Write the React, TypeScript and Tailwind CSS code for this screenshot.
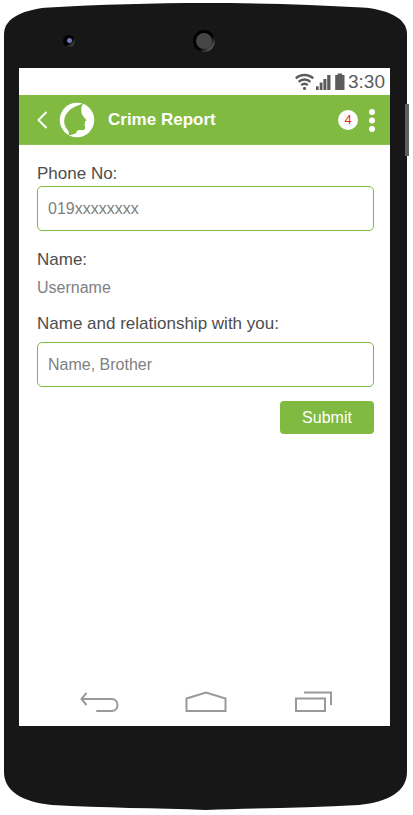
import type { ReactNode } from "react";

function StatusBar() {
  return (
    <div className="flex h-[27px] items-center justify-end gap-0.5 bg-white pr-[5px] text-[#5b5b5b]">
      <svg width="19" height="18" viewBox="0 0 19 18" fill="none" stroke="currentColor" strokeWidth="2.400" aria-hidden="true">
        <path d="M.8 5.400C5.500.9 13.500.9 18.200 5.400" />
        <path d="M3.600 8.800C7 5.800 12 5.800 15.400 8.800" />
        <path d="M6.200 12.200C8.200 10.400 10.800 10.400 12.800 12.200" />
        <circle cx="9.500" cy="15.400" r="1.600" fill="currentColor" stroke="none" />
      </svg>
      <svg width="15" height="18" viewBox="0 0 15 18" fill="currentColor" aria-hidden="true">
        <path d="M0 13.200h2.600V17H0zM3.700 9.500h2.800V17H3.700zM7.400 6h3v11h-3zM11.200 2h3.300v15h-3.300z" />
      </svg>
      <svg width="12" height="18" viewBox="0 0 12 18" fill="currentColor" className="ml-px" aria-hidden="true">
        <path d="M3.500.5h4.600v1.400h2.400V17H1.200V1.900h2.300z" />
      </svg>
      <span className="text-[19px] leading-[27px]">3:30</span>
    </div>
  );
}

function AppBar() {
  return (
    <header className="flex h-[50px] items-center border-b border-[#8dc153] bg-[#81ba41] pr-[14px] pl-[18px] text-white">
      <button type="button" aria-label="Back" className="flex">
        <svg width="11" height="18" viewBox="0 0 11 18" fill="none" stroke="currentColor" strokeWidth="2">
          <path d="M9.500 1 1.500 9l8 8" />
        </svg>
      </button>
      <svg width="36" height="36" viewBox="0 0 36 36" className="ml-[11px]" aria-hidden="true">
        <circle cx="18" cy="18" r="17.300" fill="#fff" />
        <path
          d="M24.600.9C22.600 3.800 21.900 6.200 22.400 9.200C22.600 11.200 23 12.600 24.300 14.300L27.400 18.300C27.600 19 26.200 19.300 25.800 19.700C26.300 20.600 26.100 21.300 25.400 22C26 23 25.700 23.800 26 24.800C26.300 27 25.500 28.200 23.500 28.200C21.500 28.100 19.200 27.700 18.200 28.900C17.300 30.200 17.200 31.300 15.400 32C13.700 32.600 12 32.700 10.600 33.400L9.800 32.800C10.200 30.500 9.600 29.300 8.200 27.400C5.700 24.300 4.800 21.200 5.300 17.300C6 12.800 8.500 9.800 12 7C15.800 4 20.500 3.400 24.600.9z"
          fill="#81ba41"
        />
      </svg>
      <h1 className="ml-[13px] flex-1 text-[17px] font-bold">Crime Report</h1>
      <span className="flex size-5 items-center justify-center rounded-full bg-white text-[13px] text-[#e02d1b]">4</span>
      <button type="button" aria-label="More options" className="ml-[10px] flex">
        <svg width="8" height="24" viewBox="0 0 8 24" fill="currentColor">
          <circle cx="4" cy="4" r="3" />
          <circle cx="4" cy="12.500" r="3" />
          <circle cx="4" cy="21" r="3" />
        </svg>
      </button>
    </header>
  );
}

const labelStyle = "text-[17px] leading-6 text-[#4d4d4d]";
const inputStyle =
  "h-[45px] w-full rounded-[5px] border border-[#81ba41] bg-white px-[10px] text-[16px] text-[#777777] outline-none placeholder:text-[#808080]";

function ReportForm() {
  return (
    <form className="flex flex-1 flex-col pt-[17px] pr-4 pl-[18px]" onSubmit={(e) => e.preventDefault()}>
      <label htmlFor="phone" className={labelStyle}>Phone No:</label>
      <input id="phone" type="tel" placeholder="019xxxxxxxx" className={inputStyle} />
      <label htmlFor="username" className={`mt-[17px] ${labelStyle}`}>Name:</label>
      <output id="username" className="mt-1 text-[16px] leading-6 text-[#808080]">Username</output>
      <label htmlFor="relation" className={`mt-3 mb-1.5 ${labelStyle}`}>
        Name and relationship with you:
      </label>
      <input id="relation" type="text" placeholder="Name, Brother" className={inputStyle} />
      <button type="submit" className="mt-[14px] h-[33px] w-[94px] self-end rounded-[4px] bg-[#81ba41] text-[16px] text-white">
        Submit
      </button>
    </form>
  );
}

function NavButton({ label, children }: { label: string; children: ReactNode }) {
  return (
    <button type="button" aria-label={label} className="flex">
      <svg width="44" height="24" viewBox="0 0 44 24" fill="none" stroke="#999999" strokeWidth="2">
        {children}
      </svg>
    </button>
  );
}

function NavBar() {
  return (
    <nav className="flex h-12 items-center justify-between px-14">
      <NavButton label="Back">
        <path d="M7 9H36.500c8 0 8 12 0 12H21.300M11.500 2.800 6.500 9l5 6" />
      </NavButton>
      <NavButton label="Home">
        <path d="M3.500 8.500 23 2.500 42.500 8.500V21h-39z" />
      </NavButton>
      <NavButton label="Recent apps">
        <path d="M6 8.500h29V21H6zM14 2.500h27V15" />
      </NavButton>
    </nav>
  );
}

function TopBezel() {
  return (
    <div className="relative flex h-[65px] items-center">
      <svg className="absolute inset-0 size-full" viewBox="0 0 403 65" preserveAspectRatio="none" fill="#171717" aria-hidden="true">
        <path d="M0 65V31C0 14 22 6 45 4.500 95 1.500 150 0 201.500 0S308 1.500 358 4.500C381 6 403 14 403 31V65z" />
      </svg>
      <div className="relative grid w-full grid-cols-[1fr_22px_1fr] items-center pt-[10px] pr-[3px]">
        <span className="ml-[59px] flex size-3 items-center justify-center rounded-full bg-linear-to-br from-black from-45% to-[#777777]">
          <span className="size-[5px] rounded-full bg-[#6b78bd]" />
        </span>
        <span className="flex size-[22px] items-center justify-center rounded-full bg-linear-to-br from-black from-50% to-[#999999]">
          <span className="size-4 rounded-full bg-[#454545]" />
        </span>
      </div>
    </div>
  );
}

export default function App() {
  return (
    <div className="min-h-screen bg-white font-['Liberation_Sans',Arial,sans-serif]">
      <div className="relative flex min-h-screen flex-col pt-[3px] pr-[6px] pb-[5px] pl-1">
        <TopBezel />
        <div className="flex flex-1 flex-col bg-[#171717] pr-[17px] pl-[15px]">
          <main className="flex flex-1 flex-col bg-white">
            <StatusBar />
            <AppBar />
            <ReportForm />
            <NavBar />
          </main>
        </div>
        <svg className="h-[84px] w-full" viewBox="0 0 403 84" preserveAspectRatio="none" fill="#171717" aria-hidden="true">
          <path d="M0 0H403V46C403 65 385 76 355 79 305 82 250 82 201.500 84 153 82 98 82 48 79 18 76 0 65 0 46z" />
        </svg>
        <div className="absolute top-[104px] right-1 h-[52px] w-[4px] bg-[#606060]" />
      </div>
    </div>
  );
}
